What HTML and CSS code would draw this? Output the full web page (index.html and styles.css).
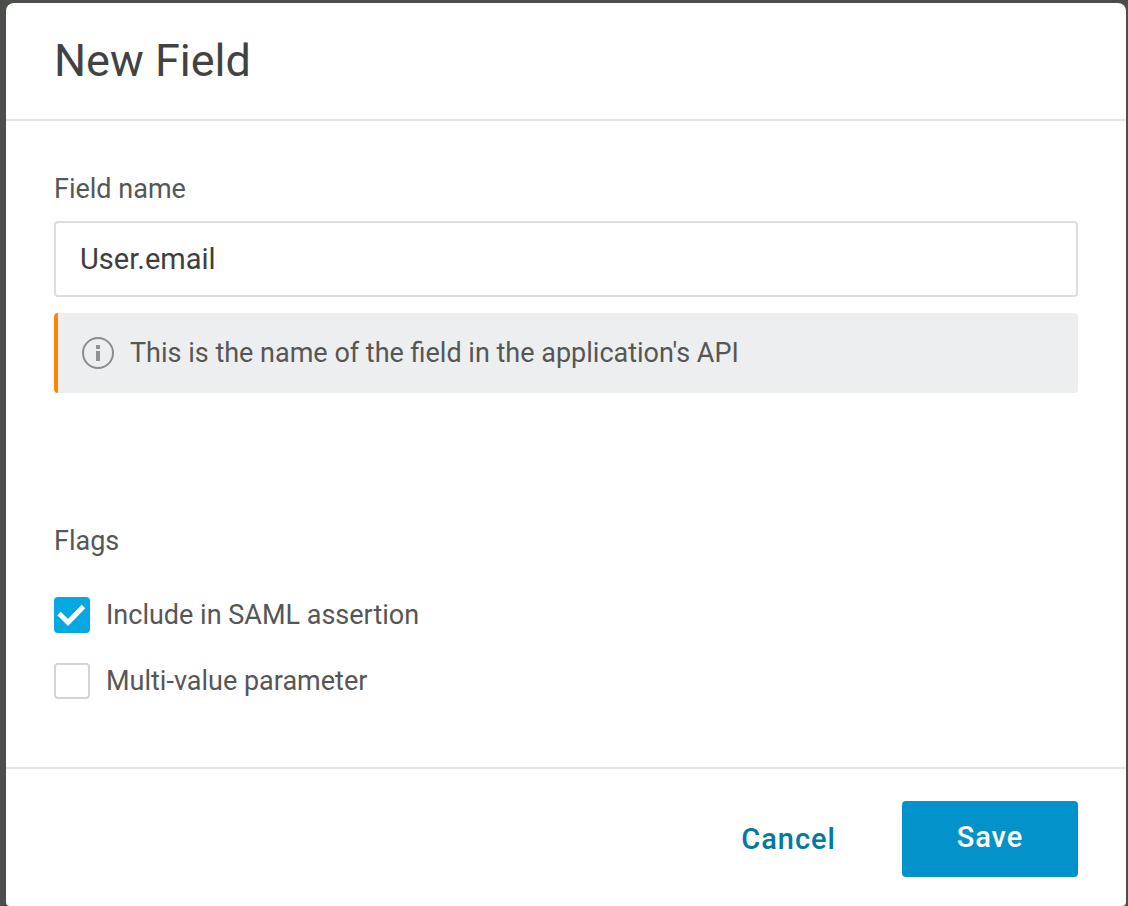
FILE: index.html
```
<!DOCTYPE html>
<html lang="en">
<head>
<meta charset="utf-8">
<title>New Field</title>
<link rel="stylesheet" href="styles.css">
</head>
<body>
<form class="dialog" role="dialog" aria-labelledby="title">
  <header class="dialog-header"><h1 id="title">New Field</h1></header>
  <main class="dialog-body">
    <label class="caption" for="name">Field name</label>
    <input class="text-field" id="name" type="text" value="User.email">
    <p class="hint">
      <svg class="hint-icon" viewBox="0 0 32 32" aria-hidden="true"><circle class="ring" cx="16" cy="16" r="15"/><path d="M14 8h4v4h-4zM14 14h4v10h-4z"/></svg>
      <span>This is the name of the field in the application's API</span>
    </p>
    <fieldset class="flags">
      <legend class="caption">Flags</legend>
      <label class="option"><span class="box"><input type="checkbox" checked><svg class="tick" viewBox="0 0 36 36" aria-hidden="true"><path d="M5 16.500l9 9L29.500 9.500"/></svg></span>Include in SAML assertion</label>
      <label class="option"><span class="box"><input type="checkbox"></span>Multi-value parameter</label>
    </fieldset>
  </main>
  <footer class="dialog-footer">
    <button class="button cancel" type="button">Cancel</button>
    <button class="button save" type="button">Save</button>
  </footer>
</form>
</body>
</html>
```
FILE: styles.css
```
* { box-sizing: border-box; }
body {
  margin: 0;
  padding: 3px 2px 0 6px;
  min-height: 100vh;
  display: flex;
  background: #4c4e4c;
  color: #555756;
  font: 27px/32px Roboto, sans-serif;
}
.dialog {
  flex: 1;
  display: flex;
  flex-direction: column;
  background: #fff;
  border-radius: 8px 8px 4px 4px;
}
.dialog-header { padding: 30px 48px; border-bottom: 2px solid #e4e4e4; }
h1 { margin: 0; color: #414342; font-size: 45px; font-weight: 400; line-height: 56px; }
.dialog-body { flex: 1; padding: 52px 48px 0; }
.caption { display: block; padding: 0; }
.text-field {
  display: block;
  width: 100%;
  height: 76px;
  margin: 16px 0;
  padding: 0 24px;
  border: 2px solid #dddddd;
  border-radius: 4px;
  color: #3d3f3e;
  font: inherit;
  font-size: 29px;
  outline: none;
}
.hint {
  display: flex;
  align-items: center;
  gap: 16px;
  height: 80px;
  margin: 0 0 132px;
  padding: 0 24px;
  border-left: 4px solid #ff8400;
  border-radius: 4px;
  background: #edeef0;
}
.hint-icon { flex: none; width: 32px; height: 32px; fill: #919292; }
.ring { fill: none; stroke: #8b8c8c; stroke-width: 2; }
.flags { margin: 0; padding: 0; border: 0; }
.flags .caption { margin-bottom: 40px; }
.option { display: flex; align-items: center; gap: 16px; height: 36px; margin-bottom: 30px; }
.box { position: relative; flex: none; width: 36px; height: 36px; }
.box input { appearance: none; display: block; width: 36px; height: 36px; margin: 0; border: 2px solid #d4d4d4; border-radius: 4px; }
.box input:checked { border-color: #04a9e3; background: #04a9e3; }
.tick { position: absolute; inset: 0; fill: none; stroke: #fff; stroke-width: 5; }
.dialog-footer { display: flex; justify-content: flex-end; gap: 16px; padding: 32px 48px 29px; border-top: 2px solid #e4e4e4; }
.button { height: 76px; border: 0; border-radius: 4px; font: 500 29px/32px Roboto, sans-serif; letter-spacing: 1px; }
.cancel { padding: 0 50px; background: none; color: #007a9f; }
.save { width: 176px; padding: 0 0 4px; background: #0392c9; color: #fff; }
```
